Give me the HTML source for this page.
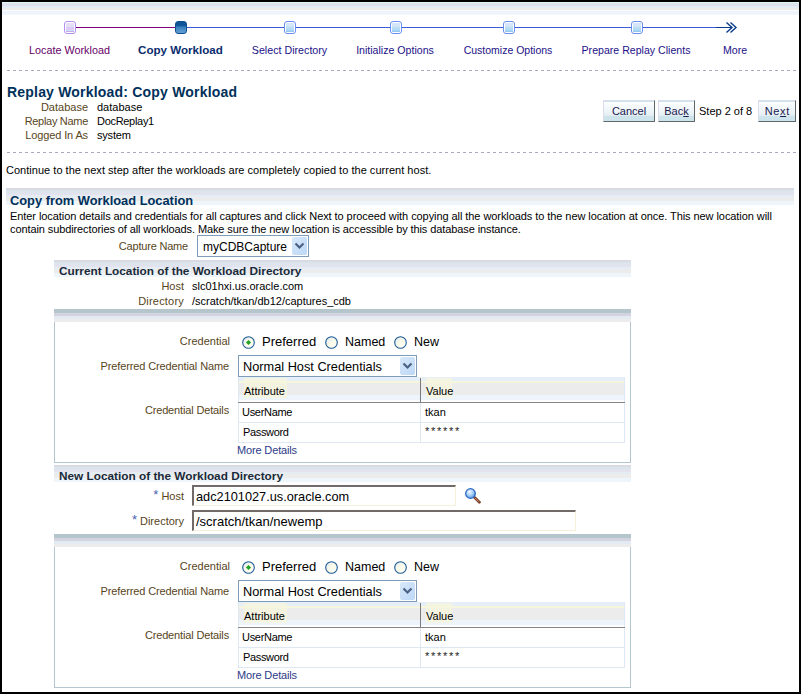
<!DOCTYPE html>
<html><head><meta charset="utf-8"><style>
html,body{margin:0;padding:0}
body{width:801px;height:694px;position:relative;overflow:hidden;background:#000;font-family:"Liberation Sans", sans-serif}
#pg{position:absolute;left:2px;top:2px;width:797px;height:690px;background:#fff}
</style></head><body><div id="pg"></div>
<div style="position:absolute;left:2px;top:2px;width:797px;height:1px;background:#e0f4fa"></div>
<div style="position:absolute;left:2px;top:3px;width:797px;height:2px;background:#dce4ec"></div>
<div style="position:absolute;left:2px;top:5px;width:797px;height:1px;background:#e6dcf2"></div>
<div style="position:absolute;left:2px;top:6px;width:797px;height:2px;background:#e2ecf4"></div>
<div style="position:absolute;left:2px;top:8px;width:797px;height:2px;background:#ececec"></div>
<div style="position:absolute;left:2px;top:10px;width:797px;height:1px;background:#fcfcfe"></div>
<div style="position:absolute;left:2px;top:11px;width:797px;height:3px;background:#eef4fc"></div>
<div style="position:absolute;left:2px;top:14px;width:797px;height:1px;background:#f4f8fe"></div>
<div style="position:absolute;left:70px;top:27px;width:111px;height:1px;background:#800080"></div>
<div style="position:absolute;left:181px;top:27px;width:536px;height:1px;background:#3b5bd8"></div>
<div style="position:absolute;left:716px;top:27px;width:16px;height:1px;background:#0a3c8a"></div>
<svg style="position:absolute;left:722px;top:20px" width="20" height="16" viewBox="0 0 20 16"><path d="M4.5 2.5 L10 7.5 L4.5 12.5 M8.5 2.5 L14 7.5 L8.5 12.5" fill="none" stroke="#0a3c8a" stroke-width="1.4"/></svg>
<div style="position:absolute;left:64px;top:21px;width:12px;height:13px;box-sizing:border-box;border:1px solid #b48ef0;border-radius:3px;background:#fff"></div>
<div style="position:absolute;left:66px;top:23px;width:8px;height:9px;background:linear-gradient(#e6def4 0,#e6def4 40%,#dccaf8 45%,#dccaf8 75%,#c8e6e8 75%,#c8e6e8 85%,#c8a8ec 85%)"></div>
<div style="position:absolute;left:175px;top:21px;width:12px;height:13px;box-sizing:border-box;border:1px solid #0e4f8e;border-radius:3px;background:linear-gradient(#0f5596,#0f5596 30%,#3b82c0 50%,#5c9ad0 90%)"></div>
<div style="position:absolute;left:284px;top:21px;width:12px;height:13px;box-sizing:border-box;border:1px solid #6b8ef4;border-radius:3px;background:#fff"></div>
<div style="position:absolute;left:286px;top:23px;width:8px;height:9px;background:linear-gradient(#d8e6fc,#d4e6f8 35%,#bcdcf4 50%,#b4daf4 75%,#8cc4f0)"></div>
<div style="position:absolute;left:390px;top:21px;width:12px;height:13px;box-sizing:border-box;border:1px solid #6b8ef4;border-radius:3px;background:#fff"></div>
<div style="position:absolute;left:392px;top:23px;width:8px;height:9px;background:linear-gradient(#d8e6fc,#d4e6f8 35%,#bcdcf4 50%,#b4daf4 75%,#8cc4f0)"></div>
<div style="position:absolute;left:503px;top:21px;width:12px;height:13px;box-sizing:border-box;border:1px solid #6b8ef4;border-radius:3px;background:#fff"></div>
<div style="position:absolute;left:505px;top:23px;width:8px;height:9px;background:linear-gradient(#d8e6fc,#d4e6f8 35%,#bcdcf4 50%,#b4daf4 75%,#8cc4f0)"></div>
<div style="position:absolute;left:631px;top:21px;width:12px;height:13px;box-sizing:border-box;border:1px solid #6b8ef4;border-radius:3px;background:#fff"></div>
<div style="position:absolute;left:633px;top:23px;width:8px;height:9px;background:linear-gradient(#d8e6fc,#d4e6f8 35%,#bcdcf4 50%,#b4daf4 75%,#8cc4f0)"></div>
<div style="position:absolute;left:-80.5px;width:300px;text-align:center;top:40px;font-size:10.8px;line-height:20px;color:#660066;font-weight:normal;white-space:nowrap;">Locate Workload</div>
<div style="position:absolute;left:30.5px;width:300px;text-align:center;top:40px;font-size:11.6px;line-height:20px;color:#0a2d6e;font-weight:bold;white-space:nowrap;">Copy Workload</div>
<div style="position:absolute;left:139.5px;width:300px;text-align:center;top:40px;font-size:10.7px;line-height:20px;color:#221188;font-weight:normal;white-space:nowrap;">Select Directory</div>
<div style="position:absolute;left:245px;width:300px;text-align:center;top:40px;font-size:10.6px;line-height:20px;color:#221188;font-weight:normal;white-space:nowrap;">Initialize Options</div>
<div style="position:absolute;left:358px;width:300px;text-align:center;top:40px;font-size:10.5px;line-height:20px;color:#221188;font-weight:normal;white-space:nowrap;">Customize Options</div>
<div style="position:absolute;left:486px;width:300px;text-align:center;top:40px;font-size:10.6px;line-height:20px;color:#221188;font-weight:normal;white-space:nowrap;">Prepare Replay Clients</div>
<div style="position:absolute;left:585px;width:300px;text-align:center;top:40px;font-size:10.6px;line-height:20px;color:#221188;font-weight:normal;white-space:nowrap;">More</div>
<div style="position:absolute;left:7px;top:70px;width:791px;height:1px;background:repeating-linear-gradient(90deg,#a8aac0 0 3px,transparent 3px 6px)"></div>
<div style="position:absolute;left:7px;top:152px;width:791px;height:1px;background:repeating-linear-gradient(90deg,#a8aac0 0 3px,transparent 3px 6px)"></div>
<div style="position:absolute;left:7px;top:82px;font-size:14px;line-height:20px;color:#00305a;font-weight:bold;white-space:nowrap;letter-spacing:0.2px">Replay Workload: Copy Workload</div>
<div style="position:absolute;right:713px;top:97px;font-size:11px;line-height:20px;color:#574522;font-weight:normal;white-space:nowrap;">Database</div>
<div style="position:absolute;right:713px;top:111px;font-size:11px;line-height:20px;color:#574522;font-weight:normal;white-space:nowrap;letter-spacing:-0.3px">Replay Name</div>
<div style="position:absolute;right:713px;top:125px;font-size:11px;line-height:20px;color:#574522;font-weight:normal;white-space:nowrap;letter-spacing:-0.12px">Logged In As</div>
<div style="position:absolute;left:97px;top:97px;font-size:11px;line-height:20px;color:#000;font-weight:normal;white-space:nowrap;">database</div>
<div style="position:absolute;left:97px;top:111px;font-size:11px;line-height:20px;color:#000;font-weight:normal;white-space:nowrap;letter-spacing:-0.3px">DocReplay1</div>
<div style="position:absolute;left:97px;top:125px;font-size:11px;line-height:20px;color:#000;font-weight:normal;white-space:nowrap;letter-spacing:-0.2px">system</div>
<div style="position:absolute;left:603px;top:100px;width:50px;height:20px;border:1px solid;border-color:#dcdcec #5f6868 #5f6868 #dcdcec;background:linear-gradient(#cfe5ec 0 1px,#fdfeff 1px,#f0f6fa 45%,#e4eef2 72%,#cde4ec 76%,#cde4ec)"></div>
<div style="position:absolute;left:603px;top:101px;width:52px;text-align:center;font-size:11px;line-height:20px;color:#1a2050;white-space:nowrap">Cancel</div>
<div style="position:absolute;left:658px;top:100px;width:35px;height:20px;border:1px solid;border-color:#dcdcec #5f6868 #5f6868 #dcdcec;background:linear-gradient(#cfe5ec 0 1px,#fdfeff 1px,#f0f6fa 45%,#e4eef2 72%,#cde4ec 76%,#cde4ec)"></div>
<div style="position:absolute;left:658px;top:101px;width:37px;text-align:center;font-size:11px;line-height:20px;color:#1a2050;white-space:nowrap">Bac<u>k</u></div>
<div style="position:absolute;left:699px;top:101px;font-size:11px;line-height:20px;color:#000;font-weight:normal;white-space:nowrap;">Step 2 of 8</div>
<div style="position:absolute;left:758px;top:100px;width:36px;height:20px;border:1px solid;border-color:#dcdcec #5f6868 #5f6868 #dcdcec;background:linear-gradient(#cfe5ec 0 1px,#fdfeff 1px,#f0f6fa 45%,#e4eef2 72%,#cde4ec 76%,#cde4ec)"></div>
<div style="position:absolute;left:758px;top:101px;width:38px;text-align:center;font-size:11px;line-height:20px;color:#1a2050;white-space:nowrap"><span style="letter-spacing:0.6px;margin-left:0.6px">Ne<u>x</u>t</span></div>
<div style="position:absolute;left:6px;top:160px;font-size:11px;line-height:20px;color:#000;font-weight:normal;white-space:nowrap;letter-spacing:0.025px">Continue to the next step after the workloads are completely copied to the current host.</div>
<div style="position:absolute;left:6px;top:188px;width:788px;height:2px;background:#dadae4"></div>
<div style="position:absolute;left:6px;top:190px;width:788px;height:3px;background:#dce4ec"></div>
<div style="position:absolute;left:6px;top:193px;width:788px;height:2px;background:#e4e2ee"></div>
<div style="position:absolute;left:6px;top:195px;width:788px;height:2px;background:#e4ecf4"></div>
<div style="position:absolute;left:6px;top:197px;width:788px;height:4px;background:#ececec"></div>
<div style="position:absolute;left:6px;top:201px;width:788px;height:4px;background:#eef6fc"></div>
<div style="position:absolute;left:10px;top:191px;font-size:12.85px;line-height:20px;color:#00305a;font-weight:bold;white-space:nowrap;">Copy from Workload Location</div>
<div style="position:absolute;left:10px;top:206px;font-size:11px;line-height:20px;color:#000;font-weight:normal;white-space:nowrap;letter-spacing:-0.07px">Enter location details and credentials for all captures and click Next to proceed with copying all the workloads to the new location at once. This new location will</div>
<div style="position:absolute;left:10px;top:219px;font-size:11px;line-height:20px;color:#000;font-weight:normal;white-space:nowrap;letter-spacing:-0.1px">contain subdirectories of all workloads. Make sure the new location is accessible by this database instance.</div>
<div style="position:absolute;right:613px;top:236px;font-size:11px;line-height:20px;color:#574522;font-weight:normal;white-space:nowrap;letter-spacing:-0.2px">Capture Name</div>
<div style="position:absolute;left:197px;top:235px;width:110px;height:20px;border:1px solid #7f9db9;background:#fff"></div>
<div style="position:absolute;left:203px;top:237px;font-size:12px;line-height:20px;color:#000;white-space:nowrap">myCDBCapture</div>
<div style="position:absolute;left:292px;top:237px;width:15px;height:18px;background:linear-gradient(135deg,#d8e8fa,#bcd8f6);border-radius:2px"></div>
<svg style="position:absolute;left:292px;top:237px" width="15" height="18" viewBox="0 0 15 18"><path d="M3.5 6.5 L7.5 10.5 L11.5 6.5" fill="none" stroke="#4d6185" stroke-width="2.2"/></svg>
<div style="position:absolute;left:54px;top:260px;width:577px;height:2px;background:#dadae4"></div>
<div style="position:absolute;left:54px;top:262px;width:577px;height:3px;background:#dce4ec"></div>
<div style="position:absolute;left:54px;top:265px;width:577px;height:2px;background:#e4e2ee"></div>
<div style="position:absolute;left:54px;top:267px;width:577px;height:2px;background:#e4ecf4"></div>
<div style="position:absolute;left:54px;top:269px;width:577px;height:4px;background:#ececec"></div>
<div style="position:absolute;left:54px;top:273px;width:577px;height:4px;background:#eef6fc"></div>
<div style="position:absolute;left:59px;top:261px;font-size:11.8px;line-height:20px;color:#1a2a3a;font-weight:bold;white-space:nowrap;">Current Location of the Workload Directory</div>
<div style="position:absolute;right:617px;top:276px;font-size:11px;line-height:20px;color:#574522;font-weight:normal;white-space:nowrap;">Host</div>
<div style="position:absolute;right:617px;top:291px;font-size:11px;line-height:20px;color:#574522;font-weight:normal;white-space:nowrap;letter-spacing:0.2px">Directory</div>
<div style="position:absolute;left:192px;top:276px;font-size:11px;line-height:20px;color:#000;font-weight:normal;white-space:nowrap;">slc01hxi.us.oracle.com</div>
<div style="position:absolute;left:192px;top:291px;font-size:11px;line-height:20px;color:#000;font-weight:normal;white-space:nowrap;">/scratch/tkan/db12/captures_cdb</div>
<div style="position:absolute;left:54px;top:309px;width:575px;height:153px;border:1px solid #b4c6cf;border-top:none"></div>
<div style="position:absolute;left:54px;top:309px;width:577px;height:4px;background:#b4c6cc"></div>
<div style="position:absolute;left:54px;top:313px;width:577px;height:3px;background:#d4d4e0"></div>
<div style="position:absolute;left:54px;top:316px;width:577px;height:3px;background:#e4eaf2"></div>
<div style="position:absolute;left:54px;top:319px;width:577px;height:3px;background:#ececec"></div>
<div style="position:absolute;right:571px;top:331px;font-size:11px;line-height:20px;color:#574522;font-weight:normal;white-space:nowrap;">Credential</div>
<svg style="position:absolute;left:242px;top:336px" width="13" height="13" viewBox="0 0 13 13"><defs><linearGradient id="rg" x1="0" y1="0" x2="1" y2="1"><stop offset="0" stop-color="#dce6f4"/><stop offset="0.5" stop-color="#fbfbe8"/><stop offset="1" stop-color="#ffffff"/></linearGradient></defs><circle cx="6.5" cy="6.5" r="5.8" fill="url(#rg)" stroke="#1c5a96" stroke-width="1.1"/><rect x="4.7" y="4.7" width="3.6" height="3.6" fill="#21a121" transform="rotate(45 6.5 6.5)"/></svg>
<div style="position:absolute;left:262px;top:332px;font-size:13px;line-height:20px;color:#000;font-weight:normal;white-space:nowrap;">Preferred</div>
<svg style="position:absolute;left:325px;top:336px" width="13" height="13" viewBox="0 0 13 13"><defs><linearGradient id="rg" x1="0" y1="0" x2="1" y2="1"><stop offset="0" stop-color="#dce6f4"/><stop offset="0.5" stop-color="#fbfbe8"/><stop offset="1" stop-color="#ffffff"/></linearGradient></defs><circle cx="6.5" cy="6.5" r="5.8" fill="url(#rg)" stroke="#1c5a96" stroke-width="1.1"/></svg>
<div style="position:absolute;left:345px;top:332px;font-size:12.5px;line-height:20px;color:#000;font-weight:normal;white-space:nowrap;">Named</div>
<svg style="position:absolute;left:394px;top:336px" width="13" height="13" viewBox="0 0 13 13"><defs><linearGradient id="rg" x1="0" y1="0" x2="1" y2="1"><stop offset="0" stop-color="#dce6f4"/><stop offset="0.5" stop-color="#fbfbe8"/><stop offset="1" stop-color="#ffffff"/></linearGradient></defs><circle cx="6.5" cy="6.5" r="5.8" fill="url(#rg)" stroke="#1c5a96" stroke-width="1.1"/></svg>
<div style="position:absolute;left:414px;top:332px;font-size:12.5px;line-height:20px;color:#000;font-weight:normal;white-space:nowrap;">New</div>
<div style="position:absolute;right:572px;top:356px;font-size:11px;line-height:20px;color:#574522;font-weight:normal;white-space:nowrap;letter-spacing:-0.12px">Preferred Credential Name</div>
<div style="position:absolute;left:238px;top:355px;width:177px;height:20px;border:1px solid #7f9db9;background:#fff"></div>
<div style="position:absolute;left:243px;top:357px;font-size:12.75px;line-height:20px;color:#000;white-space:nowrap">Normal Host Credentials</div>
<div style="position:absolute;left:400px;top:357px;width:15px;height:18px;background:linear-gradient(135deg,#d8e8fa,#bcd8f6);border-radius:2px"></div>
<svg style="position:absolute;left:400px;top:357px" width="15" height="18" viewBox="0 0 15 18"><path d="M3.5 6.5 L7.5 10.5 L11.5 6.5" fill="none" stroke="#4d6185" stroke-width="2.2"/></svg>
<div style="position:absolute;right:572px;top:400px;font-size:11px;line-height:20px;color:#574522;font-weight:normal;white-space:nowrap;letter-spacing:-0.15px">Credential Details</div>
<div style="position:absolute;left:238px;top:377px;width:387px;height:66px;border-left:1px solid #dde8f2;border-right:1px solid #dde8f2;box-sizing:border-box"></div>
<div style="position:absolute;left:239px;top:377px;width:385px;height:4px;background:#e6eef8"></div>
<div style="position:absolute;left:239px;top:381px;width:385px;height:2px;background:#f6f6dc"></div>
<div style="position:absolute;left:239px;top:383px;width:385px;height:12px;background:#ececec"></div>
<div style="position:absolute;left:239px;top:395px;width:385px;height:5px;background:#eef4fc"></div>
<div style="position:absolute;left:239px;top:400px;width:385px;height:1px;background:#fafcff"></div>
<div style="position:absolute;left:244px;top:378px;width:43px;height:20px;background:#f6f4de;opacity:0.85"></div>
<div style="position:absolute;left:426px;top:378px;width:26px;height:20px;background:#f6f4de;opacity:0.85"></div>
<div style="position:absolute;left:238px;top:402px;width:387px;height:1px;background:#858585"></div>
<div style="position:absolute;left:420px;top:378px;width:1px;height:24px;background:#7a7a7a"></div>
<div style="position:absolute;left:420px;top:403px;width:1px;height:40px;background:#dde8f2"></div>
<div style="position:absolute;left:238px;top:422px;width:387px;height:1px;background:#dde8f2"></div>
<div style="position:absolute;left:238px;top:442px;width:387px;height:1px;background:#dde8f2"></div>
<div style="position:absolute;left:244px;top:381px;font-size:11px;line-height:20px;color:#000;font-weight:normal;white-space:nowrap;">Attribute</div>
<div style="position:absolute;left:426px;top:381px;font-size:11px;line-height:20px;color:#000;font-weight:normal;white-space:nowrap;">Value</div>
<div style="position:absolute;left:242px;top:402px;font-size:11px;line-height:20px;color:#000;font-weight:normal;white-space:nowrap;letter-spacing:-0.3px">UserName</div>
<div style="position:absolute;left:425px;top:402px;font-size:11px;line-height:20px;color:#000;font-weight:normal;white-space:nowrap;">tkan</div>
<div style="position:absolute;left:243px;top:422px;font-size:11px;line-height:20px;color:#000;font-weight:normal;white-space:nowrap;letter-spacing:-0.35px">Password</div>
<div style="position:absolute;left:425px;top:421px;font-size:11px;line-height:20px;color:#222;font-weight:normal;white-space:nowrap;letter-spacing:1.7px">******</div>
<div style="position:absolute;left:237px;top:440px;font-size:11px;line-height:20px;color:#2c3a88;font-weight:normal;white-space:nowrap;letter-spacing:-0.15px">More Details</div>
<div style="position:absolute;left:54px;top:465px;width:577px;height:2px;background:#dadae4"></div>
<div style="position:absolute;left:54px;top:467px;width:577px;height:3px;background:#dce4ec"></div>
<div style="position:absolute;left:54px;top:470px;width:577px;height:2px;background:#e4e2ee"></div>
<div style="position:absolute;left:54px;top:472px;width:577px;height:2px;background:#e4ecf4"></div>
<div style="position:absolute;left:54px;top:474px;width:577px;height:4px;background:#ececec"></div>
<div style="position:absolute;left:54px;top:478px;width:577px;height:4px;background:#eef6fc"></div>
<div style="position:absolute;left:59px;top:466px;font-size:11.8px;line-height:20px;color:#1a2a3a;font-weight:bold;white-space:nowrap;">New Location of the Workload Directory</div>
<div style="position:absolute;right:617px;top:486px;font-size:11px;line-height:20px;color:#574522;font-weight:normal;white-space:nowrap;"><span style="color:#4a64b0;font-size:13px;position:relative;top:-1px;margin-right:3px">*</span>Host</div>
<div style="position:absolute;right:617px;top:511px;font-size:11px;line-height:20px;color:#574522;font-weight:normal;white-space:nowrap;"><span style="color:#4a64b0;font-size:13px;position:relative;top:-1px;margin-right:3px">*</span>Directory</div>
<div style="position:absolute;left:192px;top:485px;width:261px;height:18px;border-style:solid;border-width:2px 1px 1px 2px;border-color:#716a68 #f4f0dc #f4f0dc #716a68;background:#fff"></div>
<div style="position:absolute;left:196px;top:487px;font-size:12.75px;line-height:20px;color:#000;white-space:nowrap">adc2101027.us.oracle.com</div>
<div style="position:absolute;left:192px;top:510px;width:381px;height:18px;border-style:solid;border-width:2px 1px 1px 2px;border-color:#716a68 #f4f0dc #f4f0dc #716a68;background:#fff"></div>
<div style="position:absolute;left:196px;top:512px;font-size:13px;line-height:20px;color:#000;white-space:nowrap">/scratch/tkan/newemp</div>
<svg style="position:absolute;left:463px;top:486px" width="20" height="19" viewBox="0 0 20 19"><defs><radialGradient id="lg" cx="0.4" cy="0.35" r="0.7"><stop offset="0" stop-color="#f4faff"/><stop offset="0.5" stop-color="#a8d0f8"/><stop offset="1" stop-color="#4a8ee0"/></radialGradient></defs><line x1="11.6" y1="11.4" x2="16.4" y2="16.2" stroke="#7e3e24" stroke-width="2.8" stroke-linecap="round"/><line x1="12" y1="11.8" x2="16" y2="15.8" stroke="#c8a088" stroke-width="0.9"/><circle cx="7.5" cy="7.5" r="4.8" fill="url(#lg)" stroke="#2f6ac4" stroke-width="1.3"/></svg>
<div style="position:absolute;left:54px;top:534px;width:575px;height:153px;border:1px solid #b4c6cf;border-top:none"></div>
<div style="position:absolute;left:54px;top:534px;width:577px;height:4px;background:#b4c6cc"></div>
<div style="position:absolute;left:54px;top:538px;width:577px;height:3px;background:#d4d4e0"></div>
<div style="position:absolute;left:54px;top:541px;width:577px;height:3px;background:#e4eaf2"></div>
<div style="position:absolute;left:54px;top:544px;width:577px;height:3px;background:#ececec"></div>
<div style="position:absolute;right:571px;top:556px;font-size:11px;line-height:20px;color:#574522;font-weight:normal;white-space:nowrap;">Credential</div>
<svg style="position:absolute;left:242px;top:561px" width="13" height="13" viewBox="0 0 13 13"><defs><linearGradient id="rg" x1="0" y1="0" x2="1" y2="1"><stop offset="0" stop-color="#dce6f4"/><stop offset="0.5" stop-color="#fbfbe8"/><stop offset="1" stop-color="#ffffff"/></linearGradient></defs><circle cx="6.5" cy="6.5" r="5.8" fill="url(#rg)" stroke="#1c5a96" stroke-width="1.1"/><rect x="4.7" y="4.7" width="3.6" height="3.6" fill="#21a121" transform="rotate(45 6.5 6.5)"/></svg>
<div style="position:absolute;left:262px;top:557px;font-size:13px;line-height:20px;color:#000;font-weight:normal;white-space:nowrap;">Preferred</div>
<svg style="position:absolute;left:325px;top:561px" width="13" height="13" viewBox="0 0 13 13"><defs><linearGradient id="rg" x1="0" y1="0" x2="1" y2="1"><stop offset="0" stop-color="#dce6f4"/><stop offset="0.5" stop-color="#fbfbe8"/><stop offset="1" stop-color="#ffffff"/></linearGradient></defs><circle cx="6.5" cy="6.5" r="5.8" fill="url(#rg)" stroke="#1c5a96" stroke-width="1.1"/></svg>
<div style="position:absolute;left:345px;top:557px;font-size:12.5px;line-height:20px;color:#000;font-weight:normal;white-space:nowrap;">Named</div>
<svg style="position:absolute;left:394px;top:561px" width="13" height="13" viewBox="0 0 13 13"><defs><linearGradient id="rg" x1="0" y1="0" x2="1" y2="1"><stop offset="0" stop-color="#dce6f4"/><stop offset="0.5" stop-color="#fbfbe8"/><stop offset="1" stop-color="#ffffff"/></linearGradient></defs><circle cx="6.5" cy="6.5" r="5.8" fill="url(#rg)" stroke="#1c5a96" stroke-width="1.1"/></svg>
<div style="position:absolute;left:414px;top:557px;font-size:12.5px;line-height:20px;color:#000;font-weight:normal;white-space:nowrap;">New</div>
<div style="position:absolute;right:572px;top:581px;font-size:11px;line-height:20px;color:#574522;font-weight:normal;white-space:nowrap;letter-spacing:-0.12px">Preferred Credential Name</div>
<div style="position:absolute;left:238px;top:580px;width:177px;height:20px;border:1px solid #7f9db9;background:#fff"></div>
<div style="position:absolute;left:243px;top:582px;font-size:12.75px;line-height:20px;color:#000;white-space:nowrap">Normal Host Credentials</div>
<div style="position:absolute;left:400px;top:582px;width:15px;height:18px;background:linear-gradient(135deg,#d8e8fa,#bcd8f6);border-radius:2px"></div>
<svg style="position:absolute;left:400px;top:582px" width="15" height="18" viewBox="0 0 15 18"><path d="M3.5 6.5 L7.5 10.5 L11.5 6.5" fill="none" stroke="#4d6185" stroke-width="2.2"/></svg>
<div style="position:absolute;right:572px;top:625px;font-size:11px;line-height:20px;color:#574522;font-weight:normal;white-space:nowrap;letter-spacing:-0.15px">Credential Details</div>
<div style="position:absolute;left:238px;top:602px;width:387px;height:66px;border-left:1px solid #dde8f2;border-right:1px solid #dde8f2;box-sizing:border-box"></div>
<div style="position:absolute;left:239px;top:602px;width:385px;height:4px;background:#e6eef8"></div>
<div style="position:absolute;left:239px;top:606px;width:385px;height:2px;background:#f6f6dc"></div>
<div style="position:absolute;left:239px;top:608px;width:385px;height:12px;background:#ececec"></div>
<div style="position:absolute;left:239px;top:620px;width:385px;height:5px;background:#eef4fc"></div>
<div style="position:absolute;left:239px;top:625px;width:385px;height:1px;background:#fafcff"></div>
<div style="position:absolute;left:244px;top:603px;width:43px;height:20px;background:#f6f4de;opacity:0.85"></div>
<div style="position:absolute;left:426px;top:603px;width:26px;height:20px;background:#f6f4de;opacity:0.85"></div>
<div style="position:absolute;left:238px;top:627px;width:387px;height:1px;background:#858585"></div>
<div style="position:absolute;left:420px;top:603px;width:1px;height:24px;background:#7a7a7a"></div>
<div style="position:absolute;left:420px;top:628px;width:1px;height:40px;background:#dde8f2"></div>
<div style="position:absolute;left:238px;top:647px;width:387px;height:1px;background:#dde8f2"></div>
<div style="position:absolute;left:238px;top:667px;width:387px;height:1px;background:#dde8f2"></div>
<div style="position:absolute;left:244px;top:606px;font-size:11px;line-height:20px;color:#000;font-weight:normal;white-space:nowrap;">Attribute</div>
<div style="position:absolute;left:426px;top:606px;font-size:11px;line-height:20px;color:#000;font-weight:normal;white-space:nowrap;">Value</div>
<div style="position:absolute;left:242px;top:627px;font-size:11px;line-height:20px;color:#000;font-weight:normal;white-space:nowrap;letter-spacing:-0.3px">UserName</div>
<div style="position:absolute;left:425px;top:627px;font-size:11px;line-height:20px;color:#000;font-weight:normal;white-space:nowrap;">tkan</div>
<div style="position:absolute;left:243px;top:647px;font-size:11px;line-height:20px;color:#000;font-weight:normal;white-space:nowrap;letter-spacing:-0.35px">Password</div>
<div style="position:absolute;left:425px;top:646px;font-size:11px;line-height:20px;color:#222;font-weight:normal;white-space:nowrap;letter-spacing:1.7px">******</div>
<div style="position:absolute;left:237px;top:665px;font-size:11px;line-height:20px;color:#2c3a88;font-weight:normal;white-space:nowrap;letter-spacing:-0.15px">More Details</div>
</body></html>
